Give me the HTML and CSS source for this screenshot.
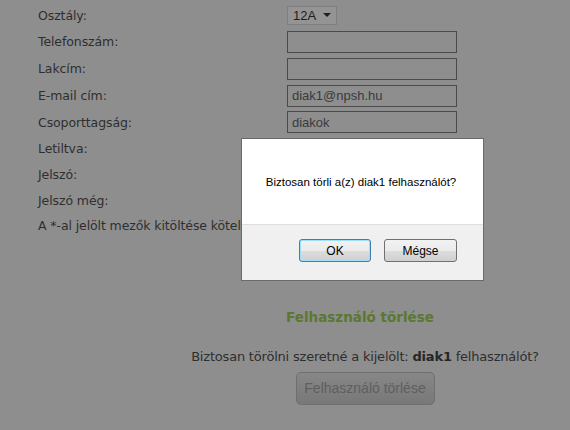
FILE: index.html
```html
<!DOCTYPE html>
<html lang="hu">
<head>
<meta charset="utf-8">
<title>Felhasználó törlése</title>
<link rel="stylesheet" href="styles.css">
</head>
<body>
<div class="page">
  <div class="form">
    <div class="label">Osztály:</div>
    <div class="field"><span class="select">12A <span class="arrow"></span></span></div>
    <div class="label">Telefonszám:</div>
    <div class="field"><span class="input"></span></div>
    <div class="label">Lakcím:</div>
    <div class="field"><span class="input"></span></div>
    <div class="label">E-mail cím:</div>
    <div class="field"><span class="input">diak1@npsh.hu</span></div>
    <div class="label">Csoporttagság:</div>
    <div class="field"><span class="input">diakok</span></div>
    <div class="label">Letiltva:</div>
    <div class="field"></div>
    <div class="label">Jelszó:</div>
    <div class="field"></div>
    <div class="label">Jelszó még:</div>
    <div class="field"></div>
    <div class="label wide">A *-al jelölt mezők kitöltése kötelező!</div>
  </div>

  <div class="delete">
    <h2 class="title">Felhasználó törlése</h2>
    <p class="question">Biztosan törölni szeretné a kijelölt: <b>diak1</b> felhasználót?</p>
    <span class="big-btn">Felhasználó törlése</span>
  </div>
</div>

<div class="dialog">
  <div class="dialog-body">Biztosan törli a(z) diak1 felhasználót?</div>
  <div class="dialog-foot">
    <span class="btn ok">OK</span>
    <span class="btn">Mégse</span>
  </div>
</div>
</body>
</html>
```

FILE: styles.css
```css
html, body {
  margin: 0;
  padding: 0;
}
body {
  width: 570px;
  height: 430px;
  overflow: hidden;
  background: #8e8e8e;
  font-family: "DejaVu Sans", "Open Sans", sans-serif;
  color: #2e2e2e;
  position: relative;
}
.page {
  padding-top: 2px;
}
.form {
  display: grid;
  grid-template-columns: 249px 283px;
  grid-template-rows: 26px 27px 27px 27px 26px 26px 26px 26px 24px;
  margin-left: 38px;
  font-size: 12.5px;
}
.label {
  display: flex;
  align-items: center;
  white-space: nowrap;
  letter-spacing: -0.1px;
}
.label.wide {
  grid-column: 1 / 3;
}
.field {
  display: flex;
  align-items: center;
}
.input {
  box-sizing: border-box;
  width: 170px;
  height: 22px;
  border: 1px solid #4b4b4b;
  font-family: "Liberation Sans", Arial, sans-serif;
  font-size: 13px;
  color: #3a3a3a;
  padding: 0 4px;
  display: flex;
  align-items: center;
}
.select {
  box-sizing: border-box;
  width: 50px;
  height: 19px;
  border: 1px solid #7f7f7f;
  background: #949494;
  font-family: "Liberation Sans", Arial, sans-serif;
  font-size: 13px;
  color: #1e1e1e;
  padding: 0 5px;
  display: flex;
  align-items: center;
  justify-content: space-between;
}
.arrow {
  width: 0;
  height: 0;
  border-left: 4px solid transparent;
  border-right: 4px solid transparent;
  border-top: 4px solid #1e1e1e;
}
.delete {
  margin-left: 160px;
  width: 410px;
  text-align: center;
  padding-top: 71px;
}
.title {
  margin: 0 0 0 -10px;
  font-size: 13.5px;
  font-weight: bold;
  color: #5b782f;
  line-height: 18px;
}
.question {
  margin: 23px 0 0 0;
  font-size: 13px;
  line-height: 16px;
  color: #2e2e2e;
  white-space: nowrap;
  letter-spacing: -0.2px;
}
.question b {
  color: #262626;
}
.big-btn {
  display: inline-block;
  box-sizing: border-box;
  margin-top: 7px;
  width: 139px;
  height: 33px;
  line-height: 31px;
  border: 1px solid #6f6f6f;
  border-radius: 5px;
  background: linear-gradient(#878787, #787878);
  font-family: "Liberation Sans", Arial, sans-serif;
  font-size: 14px;
  color: #5e5e5e;
}
.dialog {
  position: absolute;
  left: 241px;
  top: 138px;
  width: 243px;
  height: 143px;
  box-sizing: border-box;
  border: 1px solid #6a6a6a;
  background: #fff;
  display: flex;
  flex-direction: column;
  font-family: "Liberation Sans", Arial, sans-serif;
  font-size: 12px;
  color: #000;
}
.dialog-body {
  height: 85px;
  display: flex;
  align-items: center;
  justify-content: center;
  font-size: 11.5px;
  padding-right: 3px;
}
.dialog-foot {
  flex: 1;
  background: #f0f0f0;
  border-top: 1px solid #dfdfdf;
  display: flex;
  justify-content: flex-end;
  align-items: flex-start;
  gap: 13px;
  padding: 14px 26px 0 0;
}
.btn {
  box-sizing: border-box;
  width: 73px;
  height: 23px;
  border: 1px solid #707070;
  border-radius: 3px;
  background: linear-gradient(#f2f2f2 0%, #ebebeb 50%, #dddddd 51%, #cfcfcf 100%);
  display: flex;
  align-items: center;
  justify-content: center;
  font-size: 12px;
}
.btn.ok {
  width: 72px;
  border-color: #3c7fb1;
  box-shadow: inset 0 0 0 1px #9ee0f8;
}
```
